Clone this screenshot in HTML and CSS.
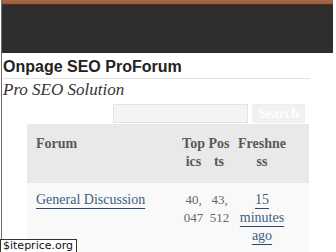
FILE: index.html
```html
<!DOCTYPE html>
<html lang="en">
<head>
    <meta charset="UTF-8">
    <meta name="viewport" content="width=device-width, initial-scale=1.0">
    <title>Onpage SEO ProForum</title>
    <link rel="stylesheet" href="styles.css">
</head>
<body>
    <div class="page">

        <!-- Dark masthead with the brown strip on top -->
        <div class="masthead"></div>

        <div class="main">
          <h1 class="site-title">Onpage SEO ProForum</h1>
          <p class="site-desc">Pro SEO Solution</p>

          <!-- Search box -->
          <form class="search-form">
            <input type="text" name="s" class="search-field">
            <button type="button" class="search-btn">Search</button>
          </form>

          <!-- Forum list -->
          <table class="forums">
            <colgroup>
              <col class="w-forum">
              <col class="w-topics">
              <col class="w-posts">
              <col class="w-fresh">
            </colgroup>
            <thead>
              <tr>
                <th class="col-forum">Forum</th>
                <th class="col-topics">Topics</th>
                <th class="col-posts">Posts</th>
                <th class="col-fresh">Freshness</th>
              </tr>
            </thead>
            <tbody>
              <tr>
                <td class="col-forum"><a href="#">General Discussion</a></td>
                <td class="col-topics">40,047</td>
                <td class="col-posts">43,512</td>
                <td class="col-fresh"><a href="#">15 minutes ago</a></td>
              </tr>
            </tbody>
          </table>
        </div>
    </div>

    <div class="badge">$iteprice.org</div>
</body>
</html>
```

FILE: styles.css
```css
* {
  box-sizing: border-box;
  margin: 0;
  padding: 0;
}

body {
  background: #fff;
  font-family: "Liberation Serif", serif;
  height: 252px;
  overflow: hidden;
}

.page {
  margin: 0 3px 0 1px;
  border-left: 1px solid #6e6e6e;
  min-height: 252px;
}

.masthead {
  height: 53px;
  background: linear-gradient(#a6694b 0, #9b5b39 4px, #5a2e17 4px, #5a2e17 5px, #2e2e2e 5px);
}

.main {
  width: 308px;
  padding-left: 1px;
}

.site-title {
  margin-top: 4px;
  font-family: "Liberation Sans", Arial, sans-serif;
  font-size: 16px;
  line-height: 20px;
  font-weight: bold;
  color: #222;
  padding-bottom: 1px;
  border-bottom: 1px solid #e3e3e3;
}

.site-desc {
  margin-top: 1px;
  font-size: 17px;
  line-height: 20px;
  font-style: italic;
  color: #333;
}

.search-form {
  display: flex;
  justify-content: flex-end;
  gap: 4px;
  margin-top: 4px;
  padding-right: 5px;
}

.search-field {
  width: 135px;
  height: 19px;
  border: 1px solid #e3e3e3;
  background: #f4f4f4;
}

.search-btn {
  width: 53px;
  height: 19px;
  border: 1px solid #eeeeee;
  background: #f1f1f1;
  color: #fff;
  font-family: "Liberation Serif", serif;
  font-size: 14px;
  font-weight: bold;
}

.forums {
  margin: 1px 0 0 24px;
  width: 282px;
  table-layout: fixed;
  border-collapse: collapse;
}

.w-forum { width: 154px; }
.w-topics { width: 25px; }
.w-posts { width: 27px; }
.w-fresh { width: 76px; }

.forums th {
  background-color: #e9e9e9;
  padding: 11px 0 12px;
  font-size: 14px;
  line-height: 18px;
  font-weight: bold;
  color: #595959;
  text-align: center;
  vertical-align: top;
  word-break: break-all;
}

.forums td {
  background-color: #f9f9f9;
  padding: 8px 0 20px;
  font-size: 14px;
  line-height: 18px;
  color: #666;
  text-align: center;
  vertical-align: top;
}

.forums .col-forum {
  text-align: left;
  padding-left: 9px;
}

.forums th.col-posts {
  padding-left: 1px;
  padding-right: 2px;
}

.forums .col-fresh {
  padding-left: 3px;
  padding-right: 21px;
}

.forums td.col-topics, .forums td.col-posts {
  font-size: 13px;
  word-break: break-all;
  padding-left: 2px;
  padding-right: 2px;
}

.forums td.col-posts {
  padding-left: 3px;
  padding-right: 3px;
}

.forums a {
  color: #3b5f80;
  text-decoration: underline;
  text-decoration-color: #2d4b68;
  text-underline-offset: 4px;
}

.badge {
  position: fixed;
  left: 0;
  bottom: 0;
  width: 77px;
  height: 13px;
  background: #fff;
  border: 1px solid #333;
  border-bottom: none;
  font-family: "DejaVu Sans", sans-serif;
  font-size: 11px;
  line-height: 12px;
  color: #111;
  padding-left: 2px;
}
```
